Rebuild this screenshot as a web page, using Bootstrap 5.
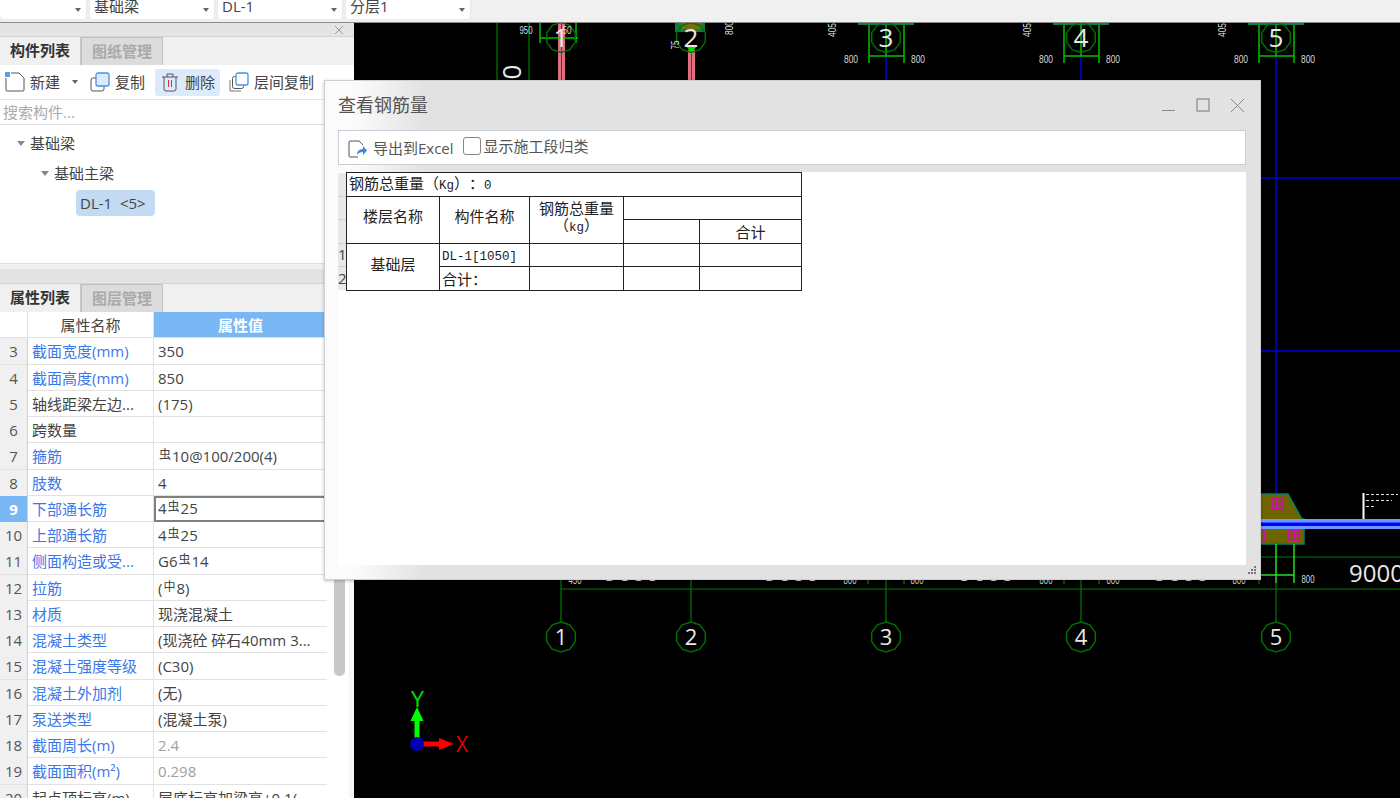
<!DOCTYPE html>
<html lang="zh">
<head>
<meta charset="UTF-8">
<title>查看钢筋量</title>
<link href="https://cdn.jsdelivr.net/npm/bootstrap@5.3.3/dist/css/bootstrap.min.css" rel="stylesheet">
<style>
html, body { height: 798px; overflow: hidden; }
body { font-family: "Open Sans", "Noto Sans CJK SC", sans-serif; font-size: 15px; color: #444; background: #f0f0f0; }
.top-strip { height: 23px; background: #f0f0f0; border-bottom: 1px solid #8a8a8a; gap: 4px; }
.fake-select { height: 19px; background: #fff; border-radius: 0 0 4px 4px; padding: 0 5px 0 4px; font-size: 15px; line-height: 15px; overflow: hidden; box-shadow: 0 0 2px #ddd; }
.fake-select span { margin-top: -6px; }
.col-first { width: 86px; }
.col-rest { width: 124px; }
.caret { width: 0; height: 0; border-left: 3px solid transparent; border-right: 3px solid transparent; border-top: 4px solid #666; flex: none; }
.workspace { height: 775px; }
.side { width: 354px; flex: none; background: #f0f0f0; }
.panel-head { height: 14px; background: #e4e4e4; border-bottom: 1px solid #d4d4d4; padding-right: 10px; }
.panel-tall { height: 15px; }
.tab-row { height: 28px; background: #f0f0f0; }
.tab-item { width: 81px; height: 28px; line-height: 27px; text-align: center; font-weight: 700; color: #333; background: #f0f0f0; border-right: 1px solid #c8c8c8; }
.tab-off { width: 82px; color: #aaa; background: #dcdcdc; border: 1px solid #c0c0c0; border-bottom: 0; }
.tool-row { height: 35px; background: #fff; border-bottom: 1px solid #e4e4e4; padding-left: 5px; white-space: nowrap; }
.tool-btn { height: 27px; gap: 5px; border-radius: 3px; }
.tool-copy { margin-left: 12px; }
.tool-on { background: #dcebfb; padding: 0 5px; margin-left: 10px; }
.tool-layer { margin-left: 9px; }
.caret-gap { margin-left: 7px; }
.search-row { height: 25px; background: #fff; color: #aaa; border-bottom: 1px solid #e0e0e0; line-height: 24px; padding-left: 3px; }
.tree-box { height: 139px; background: #fff; border-bottom: 1px solid #ddd; padding-top: 3px; }
.tree-node { height: 30px; gap: 5px; }
.tree-root { padding-left: 17px; }
.tree-sub { padding-left: 41px; }
.tree-leaf { padding-left: 76px; }
.tri { width: 0; height: 0; border-left: 4px solid transparent; border-right: 4px solid transparent; border-top: 5px solid #888; }
.tree-pick { background: #c2daf2; border-radius: 4px; height: 26px; padding: 0 4px; line-height: 26px; width: 79px; white-space: pre; overflow: hidden; }
.gap-strip { height: 5px; background: #f0f0f0; }
.prop-wrap { width: 327px; flex: none; background: #fff; }
.prop-row { height: 26.25px; display: grid; grid-template-columns: 28px 126px 173px; border-bottom: 1px solid #e2e2e2; line-height: 26px; }
.prop-num { background: #f0f0f0; text-align: center; border-right: 1px solid #d0d0d0; color: #555; }
.prop-name { padding-left: 4px; border-right: 1px solid #e2e2e2; white-space: nowrap; overflow: hidden; }
.prop-val { padding-left: 4px; white-space: nowrap; overflow: hidden; }
.prop-link { color: #3b78e7; }
.prop-grey { color: #a0a0a0; }
.prop-head .prop-num { background: #fff; border-right: 1px solid #e2e2e2; }
.prop-head .prop-name { text-align: center; padding: 0; }
.prop-head .prop-val { background: #79b7f5; color: #fff; text-align: center; font-weight: 700; padding: 0; }
.prop-now .prop-num { background: #79b7f5; color: #fff; font-weight: 700; }
.prop-now .prop-val { border: 2px solid #808080; border-right: 0; line-height: 21px; padding-left: 2px; }
.bar-sym { font-size: 12px; position: relative; top: -3px; margin: 0 1px; }
.scroll-zone { width: 27px; background: #fff; padding-left: 7px; border-right: 5px solid #f6f6f6; }
.scroll-thumb { width: 11px; height: 114px; margin-top: 250px; background: #c8c8c8; border-radius: 5px; }
.cad-view { flex: 1; background: #000; position: relative; overflow: hidden; }
.cad-view svg { display: block; }
.cad-big { font-family: "Open Sans", sans-serif; font-size: 26px; fill: #e8e8e8; text-anchor: middle; }
.cad-num { font-family: "Open Sans", sans-serif; font-size: 22px; fill: #e8e8e8; text-anchor: middle; }
.cad-dim { font-family: "Liberation Sans", sans-serif; font-size: 11px; fill: #ddd; text-anchor: middle; }
.cad-long { font-family: "Open Sans", sans-serif; font-size: 24px; fill: #e8e8e8; }
.cad-axis { font-family: "Open Sans", sans-serif; font-size: 21px; }
.steel-dlg { position: absolute; left: 324px; top: 80px; width: 937px; height: 500px; background: linear-gradient(90deg, #fbfbfb 0, #fbfbfb 30px, #e2e2e2 100px, #e2e2e2 100%); border: 1px solid #cfcfcf; box-shadow: 0 1px 3px rgba(0,0,0,.25); padding: 0 14px 14px 13px; }
.dlg-head { height: 48px; }
.dlg-title { font-size: 18px; color: #555; }
.dlg-ctrl { gap: 20px; padding-right: 1px; }
.dlg-tools { height: 35px; margin-top: 1px; background: #fff; border: 1px solid #c8ced6; padding-left: 8px; color: #555; }
.export-icon { margin-top: 2px; }
.export-label { margin: 2px 9px 0 6px; }
.tick-box { width: 18px; height: 18px; border: 1px solid #888; border-radius: 3px; background: #fff; margin-right: 3px; margin-top: -3px; }
.tick-label { margin-top: -3px; }
.sheet-area { margin-top: 7px; height: 393px; background: #fff; position: relative; }
.row-strip { width: 8px; position: absolute; left: 0; top: 1px; height: 117px; overflow: hidden; background: repeating-linear-gradient(180deg, #e8e8e8 0, #e8e8e8 22.6px, #cfcfcf 22.6px, #cfcfcf 23.6px); font-size: 15px; color: #444; line-height: 15px; }
.strip-one { position: absolute; left: 0; top: 74px; }
.strip-two { position: absolute; left: 0; top: 98px; }
.steel-table { margin-left: 8px; width: 456px; table-layout: fixed; border-collapse: collapse; font-family: "Noto Sans CJK SC", "Liberation Serif", serif; font-size: 15px; color: #222; background: #fff; text-spacing-trim: space-all; font-variant-east-asian: normal; }
.steel-table td { border: 1px solid #222; padding: 0; text-align: center; height: 23.6px; line-height: 17px; }
.steel-table .cell-left { text-align: left; padding-left: 2px; }
.steel-table .cell-hd { padding-bottom: 8px; }
.steel-table .cell-kg { padding-bottom: 4px; }
.steel-table .cell-floor { padding-bottom: 6px; }
.col-a { width: 93px; }
.col-b { width: 90px; }
.col-c { width: 94px; }
.col-d { width: 76px; }
.col-e { width: 102px; }
.mono-run { font-family: "Liberation Mono", monospace; font-size: 12.5px; }
.dlg-grip { position: absolute; right: 3px; bottom: 3px; }
</style>
</head>
<body>
<div class="top-strip d-flex">
  <div class="fake-select d-flex align-items-center justify-content-end col-first"><div class="caret"></div></div>
  <div class="fake-select d-flex align-items-center justify-content-between col-rest"><span>基础梁</span><div class="caret"></div></div>
  <div class="fake-select d-flex align-items-center justify-content-between col-rest"><span>DL-1</span><div class="caret"></div></div>
  <div class="fake-select d-flex align-items-center justify-content-between col-rest"><span>分层1</span><div class="caret"></div></div>
</div>
<div class="workspace d-flex">
  <div class="side">
    <div class="panel-head d-flex justify-content-end align-items-center">
      <svg width="10" height="10" viewBox="0 0 10 10" stroke="#999" fill="none"><path d="M1 1L9 9M9 1L1 9"/></svg>
    </div>
    <div class="tab-row d-flex"><div class="tab-item">构件列表</div><div class="tab-item tab-off">图纸管理</div></div>
    <div class="tool-row d-flex align-items-center">
      <div class="tool-btn d-flex align-items-center">
        <svg width="20" height="20" viewBox="0 0 20 20" fill="none" stroke="#555"><path d="M1 6v12q0 1 1 1h16q1 0 1-1V6l-5-5H6"/><rect x="0" y="0" width="5" height="5" fill="#5b9bf0" stroke="none"/></svg>
        <span>新建</span><div class="caret caret-gap"></div>
      </div>
      <div class="tool-btn tool-copy d-flex align-items-center">
        <svg width="20" height="20" viewBox="0 0 20 20" fill="none"><rect x="1" y="6" width="13" height="13" rx="2" stroke="#555"/><rect x="6" y="1" width="13" height="13" rx="2" fill="#dcebfb" stroke="#4a90e2" stroke-width="1.3"/></svg>
        <span>复制</span>
      </div>
      <div class="tool-btn tool-on d-flex align-items-center">
        <svg width="20" height="20" viewBox="0 0 20 20" fill="none" stroke="#555"><path d="M2 5h16M7 5V2h6v3M4 5v12q0 2 2 2h8q2 0 2-2V5"/><path d="M8.5 8v7M11.5 8v7" stroke="#d33"/></svg>
        <span>删除</span>
      </div>
      <div class="tool-btn tool-layer d-flex align-items-center">
        <svg width="20" height="20" viewBox="0 0 20 20" fill="none"><path d="M1 8v11h11" stroke="#777"/><rect x="3.5" y="4.5" width="11" height="12" rx="2" stroke="#555"/><rect x="7" y="1" width="12" height="12" rx="2" fill="#fff" stroke="#4a90e2" stroke-width="1.3"/></svg>
        <span>层间复制</span>
      </div>
    </div>
    <div class="search-row">搜索构件...</div>
    <div class="tree-box">
      <div class="tree-node tree-root d-flex align-items-center"><div class="tri"></div><span>基础梁</span></div>
      <div class="tree-node tree-sub d-flex align-items-center"><div class="tri"></div><span>基础主梁</span></div>
      <div class="tree-node tree-leaf d-flex align-items-center"><div class="tree-pick">DL-1  &lt;5&gt;</div></div>
    </div>
    <div class="gap-strip"></div>
    <div class="panel-head panel-tall"></div>
    <div class="tab-row d-flex"><div class="tab-item">属性列表</div><div class="tab-item tab-off">图层管理</div></div>
    <div class="d-flex">
      <div class="prop-wrap">
        <div class="prop-row prop-head"><div class="prop-num"></div><div class="prop-name">属性名称</div><div class="prop-val">属性值</div></div>
        <div class="prop-row"><div class="prop-num">3</div><div class="prop-name prop-link">截面宽度(mm)</div><div class="prop-val">350</div></div>
        <div class="prop-row"><div class="prop-num">4</div><div class="prop-name prop-link">截面高度(mm)</div><div class="prop-val">850</div></div>
        <div class="prop-row"><div class="prop-num">5</div><div class="prop-name">轴线距梁左边...</div><div class="prop-val">(175)</div></div>
        <div class="prop-row"><div class="prop-num">6</div><div class="prop-name">跨数量</div><div class="prop-val"></div></div>
        <div class="prop-row"><div class="prop-num">7</div><div class="prop-name prop-link">箍筋</div><div class="prop-val"><span class="bar-sym">虫</span>10@100/200(4)</div></div>
        <div class="prop-row"><div class="prop-num">8</div><div class="prop-name prop-link">肢数</div><div class="prop-val">4</div></div>
        <div class="prop-row prop-now"><div class="prop-num">9</div><div class="prop-name prop-link">下部通长筋</div><div class="prop-val">4<span class="bar-sym">虫</span>25</div></div>
        <div class="prop-row"><div class="prop-num">10</div><div class="prop-name prop-link">上部通长筋</div><div class="prop-val">4<span class="bar-sym">虫</span>25</div></div>
        <div class="prop-row"><div class="prop-num">11</div><div class="prop-name prop-link">侧面构造或受...</div><div class="prop-val">G6<span class="bar-sym">虫</span>14</div></div>
        <div class="prop-row"><div class="prop-num">12</div><div class="prop-name prop-link">拉筋</div><div class="prop-val">(<span class="bar-sym">中</span>8)</div></div>
        <div class="prop-row"><div class="prop-num">13</div><div class="prop-name prop-link">材质</div><div class="prop-val">现浇混凝土</div></div>
        <div class="prop-row"><div class="prop-num">14</div><div class="prop-name prop-link">混凝土类型</div><div class="prop-val">(现浇砼 碎石40mm 3...</div></div>
        <div class="prop-row"><div class="prop-num">15</div><div class="prop-name prop-link">混凝土强度等级</div><div class="prop-val">(C30)</div></div>
        <div class="prop-row"><div class="prop-num">16</div><div class="prop-name prop-link">混凝土外加剂</div><div class="prop-val">(无)</div></div>
        <div class="prop-row"><div class="prop-num">17</div><div class="prop-name prop-link">泵送类型</div><div class="prop-val">(混凝土泵)</div></div>
        <div class="prop-row"><div class="prop-num">18</div><div class="prop-name prop-link">截面周长(m)</div><div class="prop-val prop-grey">2.4</div></div>
        <div class="prop-row"><div class="prop-num">19</div><div class="prop-name prop-link">截面面积(m²)</div><div class="prop-val prop-grey">0.298</div></div>
        <div class="prop-row"><div class="prop-num">20</div><div class="prop-name">起点顶标高(m)</div><div class="prop-val">层底标高加梁高+0.1(</div></div>
      </div>
      <div class="scroll-zone"><div class="scroll-thumb"></div></div>
    </div>
  </div>
  <div class="cad-view">
    <svg width="1046" height="775" viewBox="354 23 1046 775" fill="none">
      <defs><polygon id="axisRing" points="0,-15 8.8,-12.1 14.3,-4.6 14.3,4.6 8.8,12.1 0,15 -8.8,12.1 -14.3,4.6 -14.3,-4.6 -8.8,-12.1" stroke="#006f00" stroke-width="1.5" fill="none"/></defs>
      <!-- blue axis lines -->
      <g stroke="#0000e0" stroke-width="1.5"><path d="M886 56V90M1081 56V90M1276 56V495"/><path d="M1255 178H1400M1255 351H1400"/></g>
      <!-- dark green dimension lines -->
      <g stroke="#007a00" stroke-width="1.2"><path d="M497 23V85M529 23V85M561 570V622M691 570V622M886 570V622M1081 570V622M1276 583V622"/><path d="M561 589H1400M1255 557H1400"/></g>
      <!-- column strips -->
      <g fill="#e07080"><rect x="558" y="23" width="7" height="60"/><rect x="688" y="50" width="7" height="33"/></g>
      <path d="M561.5 23V83M691.5 50V83" stroke="#3030d0"/>
      <g stroke="#00c000" stroke-width="1.5">
        <path d="M540 38H578M540 23V43M576 23V43"/>
        <path d="M869 23V63M904 23V63M869 56H904M886 23V56"/><path d="M1064 23V63M1099 23V63M1064 56H1099M1081 23V56"/><path d="M1259 23V63M1294 23V63M1259 56H1294M1276 23V56"/>
      </g>
      <g fill="#0a8040"><rect x="675" y="23" width="30" height="9"/><rect x="858" y="23" width="56" height="2"/><rect x="1053" y="23" width="56" height="2"/><rect x="1248" y="23" width="56" height="2"/></g>
      <rect x="681" y="23" width="20" height="6" fill="#7a6a10"/>
      <path d="M687 47H696L691.5 54Z" fill="#00e000"/>
      <use href="#axisRing" x="561" y="37.5"/><use href="#axisRing" x="691" y="37.5"/><use href="#axisRing" x="886" y="37.5"/><use href="#axisRing" x="1081" y="37.5"/><use href="#axisRing" x="1276" y="37.5"/>
      <use href="#axisRing" x="561" y="637"/><use href="#axisRing" x="691" y="637"/><use href="#axisRing" x="886" y="637"/><use href="#axisRing" x="1081" y="637"/><use href="#axisRing" x="1276" y="637"/>
      <text class="cad-big" x="561" y="47">1</text><text class="cad-big" x="691" y="47">2</text><text class="cad-big" x="886" y="47">3</text><text class="cad-big" x="1081" y="47">4</text><text class="cad-big" x="1276" y="47">5</text>
      <text class="cad-num" x="561" y="645">1</text><text class="cad-num" x="691" y="645">2</text><text class="cad-num" x="886" y="645">3</text><text class="cad-num" x="1081" y="645">4</text><text class="cad-num" x="1276" y="645">5</text>
      <!-- dimension labels -->
      <g>
        <text class="cad-dim" x="851" y="63" textLength="14" lengthAdjust="spacingAndGlyphs">800</text><text class="cad-dim" x="918" y="63" textLength="14" lengthAdjust="spacingAndGlyphs">800</text>
        <text class="cad-dim" x="1046" y="63" textLength="14" lengthAdjust="spacingAndGlyphs">800</text><text class="cad-dim" x="1113" y="63" textLength="14" lengthAdjust="spacingAndGlyphs">800</text>
        <text class="cad-dim" x="1241" y="63" textLength="14" lengthAdjust="spacingAndGlyphs">800</text><text class="cad-dim" x="1308" y="63" textLength="14" lengthAdjust="spacingAndGlyphs">800</text>
        <text class="cad-dim" x="526" y="34" textLength="13" lengthAdjust="spacingAndGlyphs">950</text><text class="cad-dim" x="567" y="34" textLength="9" lengthAdjust="spacingAndGlyphs">50</text>
        <text class="cad-dim" x="1308" y="583" textLength="13" lengthAdjust="spacingAndGlyphs">800</text>
        <text class="cad-dim" transform="rotate(-90 832 30)" x="832" y="34" textLength="14" lengthAdjust="spacingAndGlyphs">405</text>
        <text class="cad-dim" transform="rotate(-90 1027 30)" x="1027" y="34" textLength="14" lengthAdjust="spacingAndGlyphs">405</text>
        <text class="cad-dim" transform="rotate(-90 1222 30)" x="1222" y="34" textLength="14" lengthAdjust="spacingAndGlyphs">405</text>
        <text class="cad-dim" transform="rotate(-90 729 28)" x="729" y="32" textLength="14" lengthAdjust="spacingAndGlyphs">800</text>
        <text class="cad-dim" transform="rotate(-90 675 45)" x="675" y="49" textLength="9" lengthAdjust="spacingAndGlyphs">75</text>
      </g>
      <text class="cad-big" x="512" y="81" transform="rotate(-90 512 72)">0</text>
      <!-- beam section at axis 5 -->
      <path d="M1263 494H1288L1302 519H1304V544H1240V494Z" fill="#6e6400" stroke="#008060" stroke-width="1.5"/>
      <rect x="1240" y="519" width="160" height="10" fill="#6a9cff"/><rect x="1240" y="522.5" width="160" height="3.5" fill="#0000ff"/>
      <g stroke="#e000c0" stroke-width="1.5" fill="none"><rect x="1272" y="499" width="10" height="10"/><path d="M1277 499v10M1272 504h10"/><rect x="1289" y="530" width="10" height="10"/><path d="M1294 530v10M1289 535h10"/><rect x="1254" y="530" width="10" height="10"/><path d="M1259 530v10"/></g>
      <path d="M1276 544V583M1294 544V583M1255 575H1294" stroke="#20e020" stroke-width="1.5"/>
      <path d="M1363.5 519V493" stroke="#fff" stroke-width="2"/>
      <g stroke="#ddd"><path d="M1366 494.5H1398" stroke-dasharray="3 2"/><path d="M1366 500.5H1392" stroke-dasharray="3 2"/><path d="M1366 506.5H1375" stroke-dasharray="3 2"/></g>
      <text class="cad-long" x="1349" y="582">9000</text>
      <!-- peeks under the dialog -->
      <text class="cad-long" x="604" y="581">9000</text><text class="cad-long" x="764" y="581">9000</text><text class="cad-long" x="959" y="581">9000</text><text class="cad-long" x="1154" y="581">9000</text>
      <text class="cad-dim" x="575" y="584" textLength="13" lengthAdjust="spacingAndGlyphs">450</text><text class="cad-dim" x="850" y="584" textLength="13" lengthAdjust="spacingAndGlyphs">800</text><text class="cad-dim" x="917" y="584" textLength="13" lengthAdjust="spacingAndGlyphs">800</text><text class="cad-dim" x="1046" y="584" textLength="13" lengthAdjust="spacingAndGlyphs">800</text><text class="cad-dim" x="1113" y="584" textLength="13" lengthAdjust="spacingAndGlyphs">800</text><text class="cad-dim" x="1239" y="584" textLength="13" lengthAdjust="spacingAndGlyphs">800</text>
      <g stroke="#00a000"><path d="M868 578V584M904 578V584M1064 578V584M1099 578V584M1259 578V584"/></g>
      <!-- axis gizmo -->
      <path d="M417 740V720" stroke="#00ff00" stroke-width="5"/><path d="M410.5 721L417 707L423.5 721Z" fill="#00ff00"/>
      <path d="M420 744H441" stroke="#ff0000" stroke-width="5"/><path d="M439 738L454 744L439 750Z" fill="#ff0000"/>
      <circle cx="417" cy="744" r="7" fill="#0000b0"/>
      <text class="cad-axis" x="411" y="707" fill="#00e000" textLength="13" lengthAdjust="spacingAndGlyphs">Y</text>
      <text class="cad-axis" x="456" y="752" fill="#e00000" textLength="12" lengthAdjust="spacingAndGlyphs">X</text>
    </svg>
  </div>
</div>

<div class="steel-dlg">
  <div class="dlg-head d-flex align-items-center justify-content-between">
    <span class="dlg-title">查看钢筋量</span>
    <div class="dlg-ctrl d-flex align-items-center">
      <svg width="14" height="14" viewBox="0 0 14 14" stroke="#888" fill="none"><path d="M0 12.5H13"/></svg>
      <svg width="14" height="14" viewBox="0 0 14 14" stroke="#777" fill="none"><rect x="1" y="1" width="12" height="12"/></svg>
      <svg width="15" height="15" viewBox="0 0 15 15" stroke="#888" fill="none"><path d="M1 1L14 14M14 1L1 14"/></svg>
    </div>
  </div>
  <div class="dlg-tools d-flex align-items-center">
    <svg class="export-icon" width="20" height="20" viewBox="0 0 20 20" fill="none"><path d="M12 2H3q-1 0-1 1v14q0 1 1 1h8M12 2l4 4" stroke="#555"/><path d="M10 16q0-6 6-6V7l4 4.5-4 4.5v-3q-4 0-6 3z" fill="#3f86e0"/></svg>
    <span class="export-label">导出到Excel</span>
    <div class="tick-box"></div>
    <span class="tick-label">显示施工段归类</span>
  </div>
  <div class="sheet-area">
    <div class="row-strip"><div class="strip-one">1</div><div class="strip-two">2</div></div>
    <table class="steel-table">
      <colgroup><col class="col-a"><col class="col-b"><col class="col-c"><col class="col-d"><col class="col-e"></colgroup>
      <tr><td colspan="5" class="cell-left">钢筋总重量（<span class="mono-run">Kg</span>）：<span class="mono-run">0</span></td></tr>
      <tr><td rowspan="2" class="cell-hd">楼层名称</td><td rowspan="2" class="cell-hd">构件名称</td><td rowspan="2" class="cell-kg">钢筋总重量<br>（<span class="mono-run">kg</span>）</td><td colspan="2"></td></tr>
      <tr><td></td><td>合计</td></tr>
      <tr><td rowspan="2" class="cell-floor">基础层</td><td class="cell-left"><span class="mono-run">DL-1[1050]</span></td><td></td><td></td><td></td></tr>
      <tr><td class="cell-left">合计：</td><td></td><td></td><td></td></tr>
    </table>
  </div>
  <svg class="dlg-grip" width="10" height="10" viewBox="0 0 10 10" fill="#777"><rect x="7" y="0" width="2" height="2"/><rect x="4" y="3" width="2" height="2"/><rect x="7" y="3" width="2" height="2"/><rect x="1" y="6" width="2" height="2"/><rect x="4" y="6" width="2" height="2"/><rect x="7" y="6" width="2" height="2"/></svg>
</div>
<script src="https://cdn.jsdelivr.net/npm/bootstrap@5.3.3/dist/js/bootstrap.bundle.min.js"></script>
</body>
</html>
